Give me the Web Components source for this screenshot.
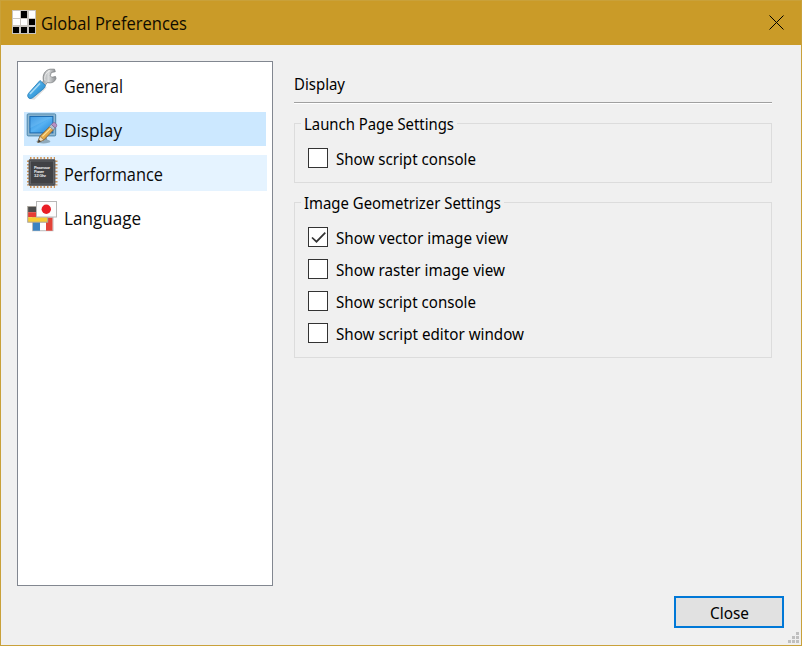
<!DOCTYPE html>
<html lang="en">
<head>
<meta charset="utf-8">
<title>Global Preferences</title>
<style>
html,body{margin:0;height:100%;overflow:hidden;background:#f0f0f0}
body{font:16px "Noto Sans","Open Sans",sans-serif;color:#000}
</style>
</head>
<body>
<pref-window></pref-window>
<script>
const define = (name, html, setup) => {
  const t = document.createElement('template');
  t.innerHTML = html;
  customElements.define(name, class extends HTMLElement {
    connectedCallback() {
      if (this.shadowRoot) return;
      this.attachShadow({mode: 'open'}).append(t.content.cloneNode(true));
      if (setup) setup(this, this.shadowRoot);
    }
  });
};

// One line of text, condensed or widened to the advance given in "w".
define('fit-text', `<style>
:host{display:block;white-space:nowrap;line-height:24px;height:24px;flex:none}
span{display:inline-block;transform-origin:0 50%}
</style><span><slot></slot></span>`, (el, root) => {
  const s = root.querySelector('span'), w = +el.getAttribute('w');
  el.style.width = w + 'px';
  s.style.transform = `scaleX(${w / s.getBoundingClientRect().width})`;
});

define('title-bar', `<style>
:host{display:flex;align-items:center;box-sizing:border-box;height:44px;padding:0 16px 0 11px;background:#ca9b28;
font:18px "Open Sans","Noto Sans",sans-serif;color:#0f0b00}
.app{margin-right:5px;margin-top:-2px}.x{margin-left:auto;margin-top:-1px}
</style>
<svg class="app" width="24" height="24"><rect width="24" height="24" fill="#c9c5bf"/>
<g fill="#fff"><rect x="1" y="1" width="7" height="7"/><rect x="17" y="1" width="6" height="7"/><rect x="1" y="9" width="7" height="6"/><rect x="9" y="9" width="6" height="6"/></g>
<g fill="#000"><rect x="9" y="1" width="6" height="7"/><rect x="17" y="9" width="6" height="6"/><rect x="1" y="17" width="6" height="6"/><rect x="9" y="17" width="6" height="6"/><rect x="17" y="17" width="6" height="6"/></g></svg>
<fit-text w="146"><slot></slot></fit-text>
<svg class="x" width="17" height="17"><path d="M1.500 1.500l14 14M15.500 1.500l-14 14" stroke="#000" stroke-width="1"/></svg>`);

const icons = {
general: `<defs><linearGradient id="h" x1="0" y1="0" x2="1" y2="1"><stop stop-color="#7cc5ee"/><stop offset=".5" stop-color="#42a5e3"/><stop offset="1" stop-color="#237dbd"/></linearGradient>
<linearGradient id="m"><stop stop-color="#8d9194"/><stop offset=".5" stop-color="#d9dbdc"/><stop offset="1" stop-color="#898c8f"/></linearGradient></defs>
<path d="M3 30l5 .8 12-12" stroke="#ddd" stroke-width="2" fill="none"/>
<path d="M15 15.500l2.500-2.500C16 7 19 2 24 1.200h4.500l.8 2.500-4 .8-1 3.300 1.500 1.500 3.700-.8.5 2c-1 3.500-4.500 5-8.500 4l-3 3.500z" fill="url(#m)" stroke="#7d8184" stroke-width=".8"/>
<path d="M19 12.500c-1-5 1.500-8.500 5-9.800" stroke="#f2f2f2" fill="none"/>
<path d="M14 12.500l5.500 5-1.500 2.800L7 29.500c-2 1.700-4.500 1-5-.6-.7-1.300-.1-3 1.200-4.300z" fill="url(#h)" stroke="#2d82bc" stroke-width=".9"/>
<path d="M4 26l10-10.500" stroke="#a9dbf5" stroke-width="1.500"/>`,
display: `<defs><linearGradient id="s" x1="0" y1="0" x2="1" y2="1"><stop stop-color="#2187dc"/><stop offset=".5" stop-color="#58b2f2"/><stop offset="1" stop-color="#1c83d7"/></linearGradient></defs>
<g transform="translate(.4 .9)"><ellipse cx="17" cy="28.500" rx="7" ry="2" fill="#8fa9ba"/><path d="M13 23h7l1 4h-9z" fill="#7d98aa"/>
<rect x=".8" y="1" width="28.500" height="22" rx="1" fill="#8fb8d2" stroke="#4c86ab"/>
<rect x="3.500" y="3.500" width="23" height="16.500" fill="url(#s)" stroke="#1968ad"/>
<path d="M4 4h22L4 15z" fill="#8dcdf7" opacity=".3"/>
<path d="M11.500 29.500l2-6L24.500 12.500l3.500 3.500L17.500 27z" fill="#e5aa49" stroke="#805d34" stroke-width=".9"/><path d="M16 23.500L25.500 14" stroke="#ffe39b" stroke-width="1.200"/>
<path d="M11.500 29.500l2-6 4 3.500z" fill="#f5dfbb" stroke="#806c50" stroke-width=".6"/><path d="M11.500 29.500l1-3 2 2z" fill="#333"/>
<path d="M23 13.500l2-2 3.700 3.500-2 2z" fill="#b3c1cd" stroke="#6f8292" stroke-width=".6"/><path d="M25 11.500l1.800-1.700c1.500-.8 4.300 1.800 3.400 3.500L28.700 15z" fill="#b891c4" stroke="#81628e" stroke-width=".7"/></g>`,
performance: `<path d="M4 2.500h25M4 30.500h25" stroke="#cf9457" stroke-width="3" stroke-dasharray="1.500 1.900"/><path d="M2.500 4.500v25M30 4.500v25" stroke="#cf9457" stroke-width="3" stroke-dasharray="1.500 1.900"/>
<rect x="3" y="3.500" width="26" height="26" rx="1" fill="#414245" stroke="#66686c"/><rect x="4.500" y="5" width="23" height="23" fill="none" stroke="#77797c" stroke-width=".6"/>
<g fill="#eee" font-family="Liberation Sans" font-weight="bold" font-size="4"><text x="8" y="12.500" textLength="16">Processor</text><text x="8" y="16.700" textLength="10">Power</text><text x="8" y="21" textLength="12">3.2 Ghz</text></g>`,
language: `<g transform="translate(1 .7)"><g><rect x="5.500" y="16.500" width="20.500" height="13.500" fill="#fff" stroke="#bbb"/><path d="M6 17h7v13H6z" fill="#3b83c1"/><path d="M19 17h6.500v13H19z" fill="#e34338"/></g>
<g><path d="M1 6h20v5.500H1z" fill="#4c4c4c"/><path d="M1 11.500h20v5H1z" fill="#e63d35"/><path d="M1 16.500h20v5H1z" fill="#f8cc34"/><rect x=".7" y="5.800" width="20" height="15.700" fill="none" stroke="#a9a39b"/></g>
<rect x="9.500" y=".8" width="20" height="15.500" fill="#fdfdfd" stroke="#b7b7b7"/><circle cx="19.300" cy="8.600" r="4.700" fill="#e91d25"/></g>`
};

define('pref-item', `<style>
:host{display:flex;height:44px;font:18px "Open Sans","Noto Sans",sans-serif;color:#0a0a0a}
.bg{display:flex;align-items:center;box-sizing:border-box;width:242px;height:34px;margin:6px 0 0 6px;padding-left:2px}
:host([selected]) .bg{background:#cce8ff}
:host([hover]) .bg{background:#e5f3ff;width:244px;height:36px;margin:5px 0 0 5px;padding-left:3px}
svg{flex:none;margin-right:6px;margin-top:-2px;overflow:visible}
fit-text{margin-top:1px}
</style><div class="bg"><svg width="32" height="32"></svg><fit-text><slot></slot></fit-text></div>`);
define('pref-list', `<style>
:host{display:block;box-sizing:border-box;width:256px;height:525px;border:1px solid #828790;background:#fff}
</style><slot></slot>`);

define('group-box', `<style>
:host{display:block;box-sizing:border-box;border:1px solid #dcdcdc;padding:0 0 12px 13px}
.cap{width:max-content;padding:0 3px;margin:-12px 0 0 -7px;background:#f0f0f0}
.body{display:flex;flex-direction:column;gap:11px;padding-top:11px}
</style><div class="cap"><slot name="caption"></slot></div><div class="body"><slot></slot></div>`);

define('check-box', `<style>
:host{display:flex;align-items:center;height:21px}
i{box-sizing:border-box;display:block;width:20px;height:20px;margin-right:8px;border:1px solid #333;background:#fff;flex:none}
svg{display:none}:host([checked]) svg{display:block}
</style><i><svg width="18" height="18"><path d="M3 9.500l4.500 4.200L16.300 4.700" fill="none" stroke="#333" stroke-width="1.700"/></svg></i><slot></slot>`);

define('push-button', `<style>
:host{display:flex;align-items:center;justify-content:center;box-sizing:border-box;width:110px;height:32px;border:2px solid #0078d7;background:#e1e1e1}
</style><slot></slot>`);

define('size-grip', `<style>
:host{display:grid;grid-template-columns:repeat(3,3px);grid-auto-rows:3px;gap:1px}
i{background:#bfbfbf}i.n{background:none}
</style><i class="n"></i><i class="n"></i><i></i><i class="n"></i><i></i><i></i><i></i><i></i><i></i>`);

define('pref-window', `<style>
:host{display:flex;flex-direction:column;box-sizing:border-box;width:802px;height:646px;border:1px solid #c9a13a;background:#f0f0f0}
main{display:flex;padding:16px 29px 0 16px;gap:21px}
section{flex:1;display:flex;flex-direction:column}
hr{width:100%;margin:6px 0 0;border:0;height:1px;background:#a0a0a0;border-bottom:1px solid #fff}
.head{margin:11px 0 0 0}
.launch{margin-top:19px;height:60px}.geo{margin-top:19px;height:156px}
footer{display:flex;flex:1;justify-content:flex-end;padding:10px 2px 2px 0}
push-button{margin-right:4px}size-grip{align-self:flex-end}
.c{margin-top:2px}
</style>
<title-bar>Global Preferences</title-bar>
<main>
<pref-list></pref-list>
<section>
<fit-text class="head" w="51">Display</fit-text>
<hr>
<group-box class="launch"><fit-text slot="caption" w="150">Launch Page Settings</fit-text>
<check-box><fit-text class="c" w="140">Show script console</fit-text></check-box></group-box>
<group-box class="geo"><fit-text slot="caption" w="197">Image Geometrizer Settings</fit-text>
<check-box checked><fit-text class="c" w="172">Show vector image view</fit-text></check-box>
<check-box><fit-text class="c" w="169">Show raster image view</fit-text></check-box>
<check-box><fit-text class="c" w="140">Show script console</fit-text></check-box>
<check-box><fit-text class="c" w="188">Show script editor window</fit-text></check-box></group-box>
</section>
</main>
<footer><push-button><fit-text class="c" w="39">Close</fit-text></push-button><size-grip></size-grip></footer>`, (el, root) => {
  const list = root.querySelector('pref-list');
  for (const [name, w, state] of [['General', 59], ['Display', 58, 'selected'], ['Performance', 99, 'hover'], ['Language', 77]]) {
    const it = document.createElement('pref-item');
    if (state) it.setAttribute(state, '');
    it.textContent = name;
    list.append(it);
    it.shadowRoot.querySelector('svg').innerHTML = icons[name.toLowerCase()];
    const f = it.shadowRoot.querySelector('fit-text'), s = f.shadowRoot.querySelector('span');
    f.style.width = w + 'px';
    s.style.transform = 'none';
    s.style.transform = `scaleX(${w / s.getBoundingClientRect().width})`;
  }
});
</script>
</body>
</html>
